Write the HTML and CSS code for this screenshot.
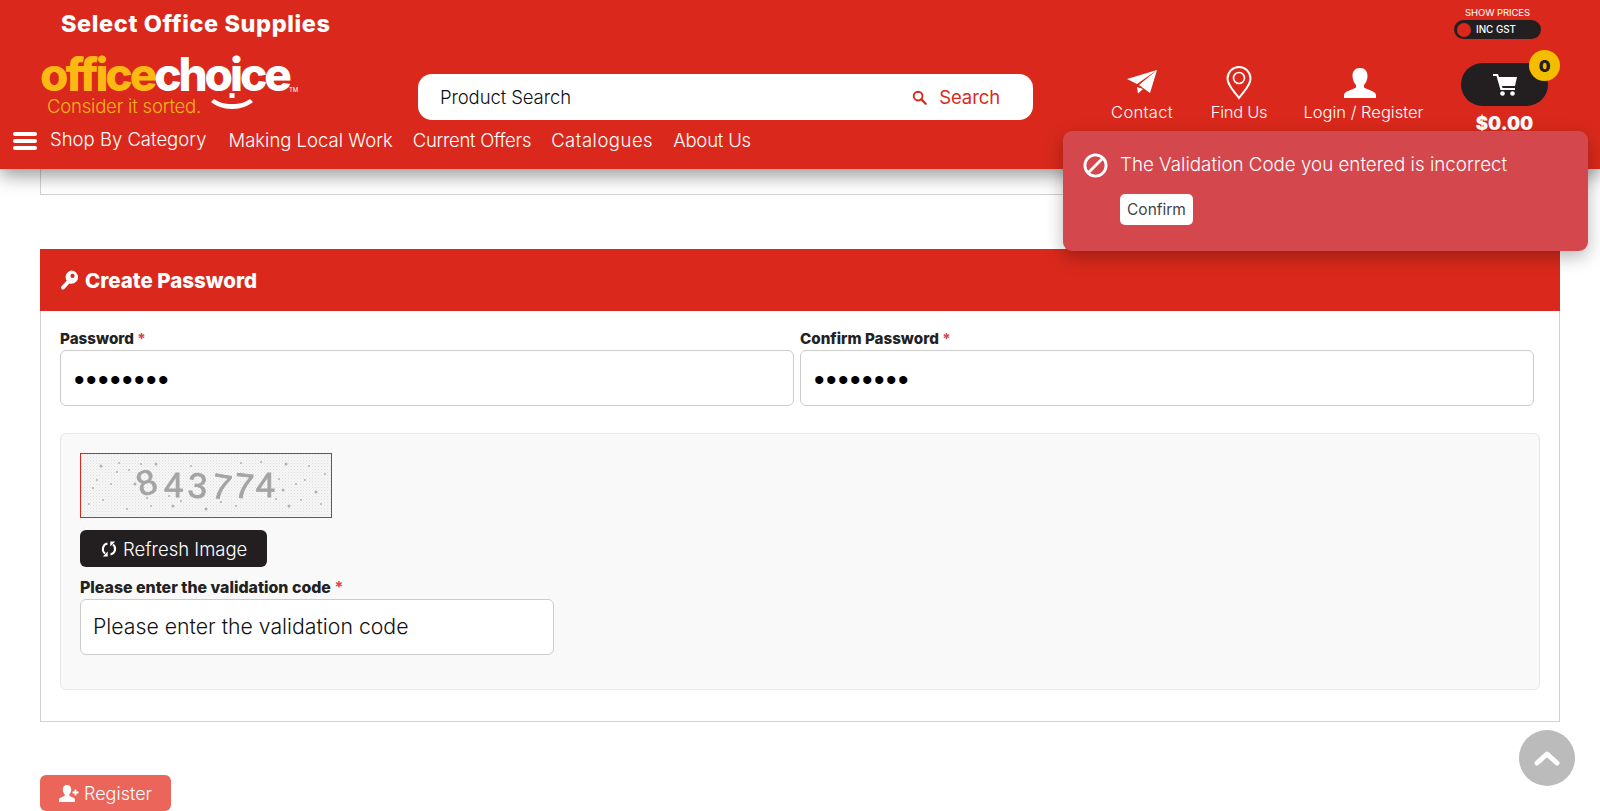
FILE: index.html
```html
<!DOCTYPE html>
<html lang="en">
<head>
<meta charset="utf-8">
<title>Create Password</title>
<link rel="stylesheet" href="styles.css">
</head>
<body>
<header class="site-header">
  <div class="top-row">
    <div class="store-name">Select Office Supplies</div>
    <div class="price-toggle">
      <span class="price-label">SHOW PRICES</span>
      <span class="price-pill"><i class="price-dot"></i><span>INC GST</span></span>
    </div>
  </div>
  <div class="mid-row">
    <a class="logo">
      <span class="logo-word"><span class="logo-office">office</span><span class="logo-choice">choice</span><sup class="logo-tm">TM</sup></span>
      <span class="logo-tag">Consider it sorted.</span>
      <svg class="logo-smile" viewBox="0 0 42 20"><rect x="18.500" y="0" width="5" height="5" fill="#fff"/><path d="M0 9c5 4 12 7 21 7s16-3 21-7l-3-3c-4 3-10 5-18 5S7 9 3 6z" fill="#fff"/></svg>
    </a>
    <form class="search">
      <span class="search-text">Product Search</span>
      <span class="search-btn">
        <svg class="search-icon" viewBox="0 0 16 16"><circle cx="6.5" cy="6.5" r="4.7" fill="none" stroke="#da291c" stroke-width="2"/><path d="M10 10l4.6 4.6" stroke="#da291c" stroke-width="2.4" stroke-linecap="round"/></svg>
        <span>Search</span>
      </span>
    </form>
    <nav class="quick-links">
      <a class="quick contact">
        <svg class="q-icon q-plane" viewBox="0 0 32 26"><path d="M31 1L1 10l10 5z M31 1L13 16l11 8z M11 18l1 6.500 5-4.500z" fill="#fff"/></svg>
        <span>Contact</span>
      </a>
      <a class="quick findus">
        <svg class="q-icon q-pin" viewBox="0 0 26 34"><path d="M13 32C9 26 1.500 20 1.500 12.500a11.500 11.500 0 0 1 23 0C24.500 20 17 26 13 32z" fill="none" stroke="#fff" stroke-width="2"/><circle cx="13" cy="12" r="5.500" fill="none" stroke="#fff" stroke-width="1.600"/></svg>
        <span>Find Us</span>
      </a>
      <a class="quick login">
        <svg class="q-icon q-user" viewBox="0 0 32 30"><path d="M16 0c5 0 7.500 3.500 7.500 8 0 3.500-1.500 7-3.500 9v2.500c3 2 11 3.500 12 7V30H0v-3.500c1-3.500 9-5 12-7V17c-2-2-3.500-5.500-3.500-9C8.500 3.500 11 0 16 0z" fill="#fff"/></svg>
        <span>Login / Register</span>
      </a>
    </nav>
    <div class="cart">
      <div class="cart-pill">
        <svg class="cart-icon" viewBox="0 0 24 22"><path d="M0 0h5l1 3h18l-2 9H9l.5 2H22v2H7.500L3.500 2H0z" fill="#fff"/><circle cx="9.500" cy="19.500" r="2.300" fill="#fff"/><circle cx="19.500" cy="19.500" r="2.300" fill="#fff"/></svg>
        <span class="cart-badge">0</span>
      </div>
      <div class="cart-total">$0.00</div>
    </div>
  </div>
  <div class="nav-row">
    <a class="nav-link nav-shop">
      <span class="burger"><i></i><i></i><i></i></span>
      <span class="shop-label">Shop By Category</span>
    </a>
    <a class="nav-link">Making Local Work</a>
    <a class="nav-link nav-offers">Current Offers</a>
    <a class="nav-link nav-catalogues">Catalogues</a>
    <a class="nav-link nav-about">About Us</a>
  </div>
</header>

<aside class="toast">
  <div class="toast-msg">
    <svg class="toast-icon" viewBox="0 0 26 26"><circle cx="13" cy="13" r="11" fill="none" stroke="#fff" stroke-width="3"/><path d="M5.500 20.500l15-15" stroke="#fff" stroke-width="3"/></svg>
    <span>The Validation Code you entered is incorrect</span>
  </div>
  <button class="toast-btn" type="button">Confirm</button>
</aside>

<main class="page">
  <div class="stub-card"></div>

  <section class="card">
    <h2 class="card-head">
      <svg class="key-icon" viewBox="0 0 18 20"><path d="M11 0a7 7 0 0 1 0 14c-.8 0-1.500-.1-2.200-.4L3.500 19.400c-.8.800-2 .800-2.800 0s-.8-1.900 0-2.700l5.300-6A7 7 0 0 1 11 0zm1.200 3.500a2.200 2.200 0 1 0 0 4.400 2.200 2.200 0 0 0 0-4.400z" fill="#fff" fill-rule="evenodd"/></svg>
      <span>Create Password</span>
    </h2>
    <div class="card-body">
      <div class="field-row">
        <div class="field">
          <label class="field-label">Password <em>*</em></label>
          <input class="input input-pass" type="password" value="12345678">
        </div>
        <div class="field">
          <label class="field-label">Confirm Password <em>*</em></label>
          <input class="input input-pass" type="password" value="12345678">
        </div>
      </div>
      <div class="captcha-panel">
        <svg class="captcha" viewBox="0 0 250 63">
          <defs>
            <pattern id="dots" width="3" height="3" patternUnits="userSpaceOnUse"><rect width="3" height="3" fill="#f7f7f7"/><rect width="1" height="1" fill="#dedede"/><rect x="1.500" y="1.500" width="1" height="1" fill="#e6e6e6"/></pattern>
            <filter id="soft"><feGaussianBlur stdDeviation="0.7"/></filter>
          </defs>
          <rect width="250" height="63" fill="url(#dots)"/>
          <g fill="#b0b0b0" filter="url(#soft)">
            <circle cx="20" cy="12" r="1.500"/><circle cx="38" cy="9" r="1"/><circle cx="54" cy="30" r="1.500"/><circle cx="36" cy="18" r="1"/><circle cx="22" cy="46" r="1"/><circle cx="60" cy="10" r="1"/><circle cx="75" cy="10" r="1.500"/><circle cx="70" cy="52" r="1"/><circle cx="100" cy="47" r="1"/><circle cx="125" cy="55" r="1.500"/><circle cx="155" cy="52" r="1"/><circle cx="180" cy="8" r="1"/><circle cx="205" cy="10" r="1.500"/><circle cx="215" cy="30" r="1"/><circle cx="235" cy="38" r="1.500"/><circle cx="208" cy="52" r="1.500"/><circle cx="228" cy="12" r="1"/><circle cx="240" cy="50" r="1"/><circle cx="12" cy="34" r="1"/><circle cx="88" cy="42" r="1"/><circle cx="198" cy="25" r="1"/><circle cx="46" cy="55" r="1"/><circle cx="110" cy="12" r="1"/><circle cx="30" cy="30" r="1"/><circle cx="92" cy="52" r="1.500"/><circle cx="66" cy="44" r="1"/><circle cx="195" cy="45" r="1"/><circle cx="224" cy="26" r="1"/><circle cx="160" cy="9" r="1"/><circle cx="140" cy="48" r="1"/><circle cx="8" cy="50" r="1"/><circle cx="16" cy="26" r="1"/><circle cx="48" cy="16" r="1"/><circle cx="202" cy="36" r="1.500"/><circle cx="244" cy="20" r="1"/><circle cx="220" cy="46" r="1"/>
          </g>
          <text class="captcha-text" x="60" y="43" rotate="-18 0 4 10 6 0" filter="url(#soft)">843774</text>
        </svg>
        <button class="refresh-btn" type="button">
          <svg class="refresh-icon" viewBox="0 0 16 16"><path d="M6.500 2.600A5.600 5.600 0 0 0 4 12.500M9.500 13.400A5.600 5.600 0 0 0 12 3.500" fill="none" stroke="#fff" stroke-width="2"/><path d="M1.800 15.500h4.900v-4.900zM14.200.5H9.300v4.900z" fill="#fff"/></svg>
          <span>Refresh Image</span>
        </button>
        <label class="field-label code-label">Please enter the validation code <em>*</em></label>
        <input class="input input-code" type="text" placeholder="Please enter the validation code">
      </div>
    </div>
  </section>

  <button class="register-btn" type="button">
    <svg class="register-icon" viewBox="0 0 20 17"><path d="M8 0c2.800 0 4.200 2 4.200 4.500 0 2-.8 3.800-1.900 5v1.200c1.800 1.100 5.700 2 5.700 3.800V17H0v-2.500c0-1.800 3.900-2.700 5.700-3.800V9.500C4.600 8.300 3.800 6.500 3.800 4.500 3.800 2 5.200 0 8 0z" fill="#fff"/><path d="M13.500 7.500h6M16.500 4.500v6" stroke="#fff" stroke-width="1.800"/></svg>
    <span>Register</span>
  </button>
</main>

<a class="to-top">
  <svg viewBox="0 0 26 16"><path d="M3 13l10-9 10 9" fill="none" stroke="#fff" stroke-width="5" stroke-linecap="round" stroke-linejoin="round"/></svg>
</a>
</body>
</html>
```

FILE: styles.css
```css
* { box-sizing: border-box; }
html, body { margin: 0; padding: 0; height: 811px; overflow: hidden; background: #fff; }
body { font-family: "Inter", "Liberation Sans", sans-serif; color: #222; position: relative; }
a { color: inherit; text-decoration: none; }

/* Header */
.site-header {
  position: relative;
  z-index: 5;
  height: 169px;
  background: #da291c;
  color: #fff;
  box-shadow: 0 6px 18px rgba(0, 0, 0, .42);
}
.top-row { height: 54px; display: flex; justify-content: space-between; padding: 8px 59px 0 61px; }
.store-name { font-size: 23.500px; font-weight: 800; line-height: 32px; letter-spacing: .6px; }
.price-toggle { display: flex; flex-direction: column; align-items: center; width: 87px; }
.price-label { font-size: 9.500px; line-height: 10px; letter-spacing: -.1px; white-space: nowrap; }
.price-pill { width: 87px; height: 19px; border-radius: 10px; background: #231f20; display: flex; align-items: center; padding-left: 3px; margin-top: 2px; font-size: 9.800px; font-weight: 500; }
.price-dot { width: 14px; height: 14px; border-radius: 50%; background: #da291c; margin-right: 5px; }

.mid-row { height: 71px; display: flex; padding-left: 40px; position: relative; }
.logo { position: relative; width: 256px; height: 62px; display: block; flex: none; }
.logo-word { display: block; font-size: 46px; line-height: 40px; font-weight: 800; letter-spacing: -3.100px; white-space: nowrap; }
.logo-office { color: #fdb913; }
.logo-choice { color: #fff; }
.logo-tm { position: absolute; left: 249px; top: 32px; font-size: 6px; line-height: 8px; letter-spacing: 0; font-weight: 400; }
.logo-tag { position: absolute; left: 7px; top: 41px; font-size: 18.500px; line-height: 22px; color: #f5b21a; white-space: nowrap; font-weight: 300; letter-spacing: -.2px; }
.logo-smile { position: absolute; left: 171px; top: 39px; width: 42px; height: 20px; }

.search { width: 615px; height: 46px; margin: 20px 0 0 122px; flex: none; background: #fff; border-radius: 14px; display: flex; align-items: center; justify-content: space-between; padding: 0 33px 0 22px; font-size: 18.500px; font-weight: 300; color: #111; letter-spacing: -.1px; }
.search-btn { display: flex; align-items: center; gap: 12px; color: #da291c; font-weight: 400; }
.search-icon { width: 15px; height: 15px; }

.quick-links { display: flex; margin-left: 77px; flex: none; padding-top: 12px; }
.quick { display: flex; flex-direction: column; align-items: center; font-size: 16.500px; line-height: 22px; white-space: nowrap; font-weight: 300; }
.q-icon { display: block; height: 33px; }
.contact { width: 64px; letter-spacing: .3px; }
.findus { width: 54px; margin-left: 38px; letter-spacing: -.3px; }
.login { width: 121px; margin-left: 37px; }
.q-plane { width: 32px; height: 26px; margin: 3px 0 6px; }
.q-pin { width: 26px; height: 34px; margin-bottom: 1px; margin-top: 0; }
.q-user { width: 32px; height: 30px; margin: 2px 8px 3px 0; }

.cart { margin-left: 37px; width: 87px; flex: none; display: flex; flex-direction: column; align-items: center; position: relative; padding-top: 9px; }
.cart-pill { width: 87px; height: 43px; flex: none; border-radius: 22px; background: #231f20; display: flex; align-items: center; justify-content: center; }
.cart-icon { width: 24px; height: 22px; }
.cart-badge { position: absolute; right: -12px; top: -4px; width: 31px; height: 31px; border-radius: 50%; background: #f5bd00; color: #231f20; font-weight: 900; font-size: 16.500px; display: flex; align-items: center; justify-content: center; }
.cart-total { font-size: 18.500px; line-height: 24px; font-weight: 900; margin-top: 5px; flex: none; position: relative; z-index: 1; }

.nav-row { height: 44px; display: flex; align-items: flex-start; padding: 3px 0 0 13px; font-size: 18.500px; line-height: 24px; white-space: nowrap; font-weight: 300; }
.nav-link { display: flex; align-items: center; margin-right: 20px; }
.nav-shop { margin-right: 22px; }
.nav-offers { letter-spacing: -.3px; }
.nav-catalogues { letter-spacing: .5px; }
.nav-about { letter-spacing: -.2px; }
.burger { width: 24px; display: flex; flex-direction: column; gap: 3px; margin-right: 13px; padding-top: 2px; }
.burger i { display: block; height: 4px; border-radius: 2px; background: #fff; }
.shop-label { position: relative; bottom: 1px; }

/* Toast */
.toast {
  position: absolute;
  z-index: 9;
  left: 1063px;
  top: 131px;
  width: 525px;
  height: 120px;
  background: #d4474d;
  border-radius: 9px;
  box-shadow: 0 6px 18px rgba(0, 0, 0, .28);
  padding: 19px 20px 0;
  color: #fff;
}
.toast-msg { display: flex; align-items: center; gap: 12px; font-size: 18.750px; line-height: 30px; white-space: nowrap; font-weight: 300; }
.toast-icon { width: 25px; height: 25px; flex: none; }
.toast-btn { display: block; margin: 14px 0 0 37px; width: 73px; height: 31px; padding: 0; border: 0; border-radius: 5px; background: #fff; color: #444; font: 400 15.500px "Inter", sans-serif; }

/* Page */
.page { padding: 0 40px; }
.stub-card { height: 26px; border: 1px solid #d2d2d2; border-top: 0; }
.card { margin-top: 54px; height: 473px; border: 1px solid #d2d2d2; border-top: 0; }
.card-head { margin: 0 -1px; height: 62px; background: #da291c; color: #fff; display: flex; align-items: center; gap: 7px; padding-left: 21px; font-size: 20.500px; font-weight: 800; letter-spacing: 0; }
.key-icon { width: 17px; height: 20px; }
.card-body { padding: 18px 19px 0; }
.field-row { display: flex; gap: 6px; padding-right: 6px; }
.field { flex: 1; }
.field-label { display: block; font-size: 15.200px; line-height: 20px; font-weight: 800; color: #222; }
.field-label em { color: #d9434a; font-style: normal; font-weight: 700; }
.input { display: block; width: 100%; height: 56px; border: 1px solid #ccc; border-radius: 6px; background: #fff; outline: 0; color: #000; font-family: "Inter", sans-serif; }
.input-pass { margin-top: 1px; padding: 3px 13px 0; font-family: "Liberation Sans", sans-serif; font-size: 30px; letter-spacing: 1.500px; }
.captcha-panel { margin-top: 27px; height: 257px; border: 1px solid #e8e8e8; border-radius: 6px; background: #f9f9f9; padding: 19px 19px 0; }
.captcha { display: block; width: 252px; height: 65px; border: 1px solid #da291c; }
.captcha-text { font-family: "Liberation Sans", sans-serif; font-size: 35px; font-weight: 400; fill: #a4a4a4; stroke: #a4a4a4; stroke-width: .8px; letter-spacing: 3.500px; }
.refresh-btn { display: flex; align-items: center; gap: 6px; margin-top: 12px; width: 187px; height: 37px; padding: 0 0 0 21px; border: 0; border-radius: 6px; background: #231f20; color: #fff; font: 300 18.500px "Inter", sans-serif; white-space: nowrap; }
.refresh-icon { width: 16px; height: 16px; flex: none; }
.code-label { margin-top: 11px; font-size: 15.900px; }
.input-code { width: 474px; margin-top: 1px; padding: 0 12px 2px; font-size: 21.250px; font-weight: 300; }
.input-code::placeholder { color: #111; opacity: 1; }
.register-btn { display: flex; align-items: center; gap: 5px; margin-top: 53px; width: 131px; height: 36px; padding: 0 0 0 19px; border: 0; border-radius: 6px; background: #ec655b; color: #fff; font: 300 18px "Inter", sans-serif; }
.register-icon { width: 20px; height: 17px; flex: none; }
.to-top { position: absolute; left: 1519px; top: 730px; width: 56px; height: 56px; border-radius: 50%; background: #bbb; display: flex; align-items: center; justify-content: center; }
.to-top svg { width: 26px; height: 16px; }
```
